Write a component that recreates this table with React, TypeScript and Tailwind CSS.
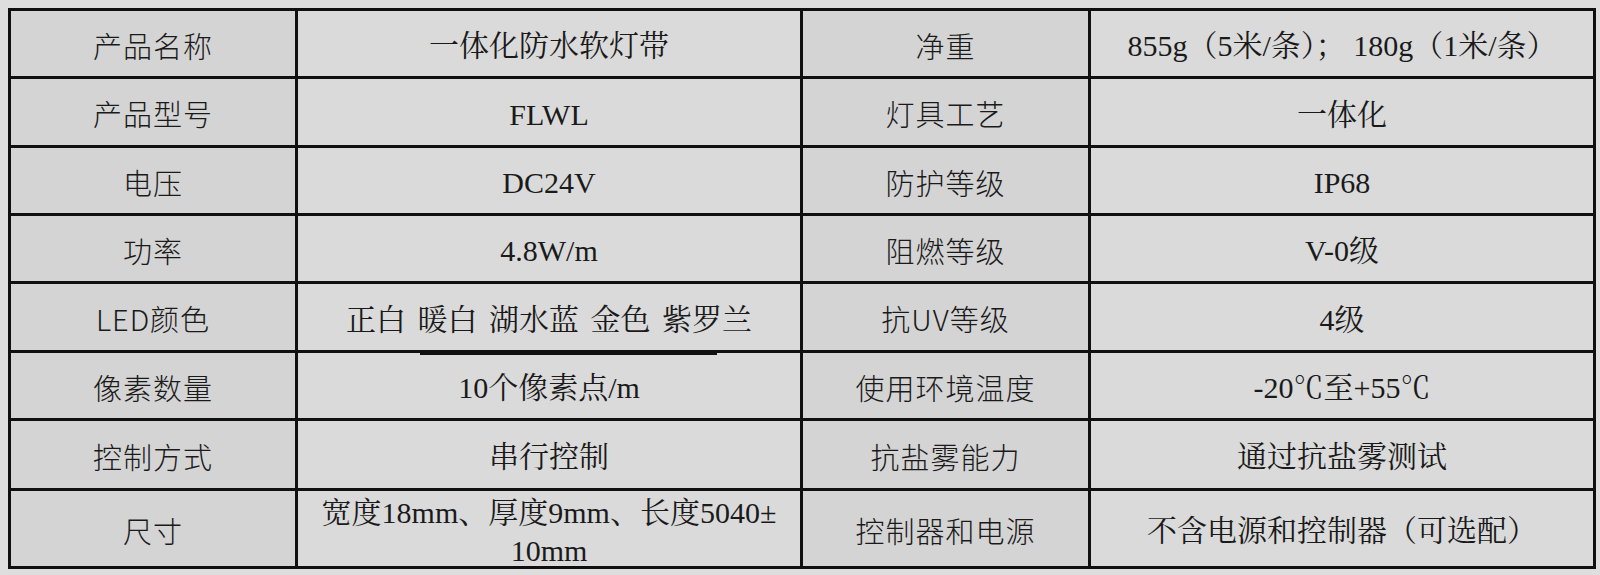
import React from "react";

const rows: [string, React.ReactNode, string, React.ReactNode][] = [
  ["产品名称", "一体化防水软灯带", "净重", "855g（5米/条）； 180g（1米/条）"],
  ["产品型号", "FLWL", "灯具工艺", "一体化"],
  ["电压", "DC24V", "防护等级", "IP68"],
  ["功率", "4.8W/m", "阻燃等级", "V-0级"],
  ["LED颜色", "正白 暖白 湖水蓝 金色 紫罗兰", "抗UV等级", "4级"],
  ["像素数量", "10个像素点/m", "使用环境温度", "-20℃至+55℃"],
  ["控制方式", "串行控制", "抗盐雾能力", "通过抗盐雾测试"],
  [
    "尺寸",
    (
      <>
        宽度18mm、厚度9mm、长度5040±
        <br />
        10mm
      </>
    ),
    "控制器和电源",
    "不含电源和控制器（可选配）",
  ],
];

const labelFont = {
  fontFamily: '"Noto Sans CJK SC", "Noto Sans", sans-serif',
};
const valueFont = {
  fontFamily: '"Liberation Serif", "Noto Serif CJK SC", "Noto Sans CJK SC", serif',
};

export default function App() {
  return (
    <div className="w-[1600px] h-[575px] bg-[#dedede] pt-[8px] pl-[8px]">
      <div className="w-[1588px] grid grid-cols-[284px_502px_285px_502px] grid-rows-[65px_66px_65px_65px_66px_65px_67px_75px] gap-[3px] p-[3px] bg-[#101010]">
        {rows.map((r, i) => (
          <React.Fragment key={i}>
            <div
              className="bg-[#d4d4d4] flex items-center justify-center pt-[4px] text-[29px] text-[#1a1a1a] tracking-[1px] font-light"
              style={labelFont}
            >
              {r[0]}
            </div>
            <div
              className={
                "relative bg-[#dadada] flex items-center justify-center text-center text-[30px] text-[#1a1a1a] " +
                (i === 7 ? "leading-[38px] pt-[6px]" : "pt-[4px]")
              }
              style={valueFont}
            >
              {i === 5 && (
                <div className="absolute top-0 left-[122px] w-[297px] h-[2px] bg-[#101010]" />
              )}
              <span className={i === 4 ? "whitespace-pre [word-spacing:4px]" : ""}>{r[1]}</span>
            </div>
            <div
              className="bg-[#d4d4d4] flex items-center justify-center pt-[4px] text-[29px] text-[#1a1a1a] tracking-[1px] font-light"
              style={labelFont}
            >
              {r[2]}
            </div>
            <div
              className="bg-[#dadada] flex items-center justify-center pt-[4px] text-[30px] text-[#1a1a1a] whitespace-pre"
              style={valueFont}
            >
              {r[3]}
            </div>
          </React.Fragment>
        ))}
      </div>
    </div>
  );
}
